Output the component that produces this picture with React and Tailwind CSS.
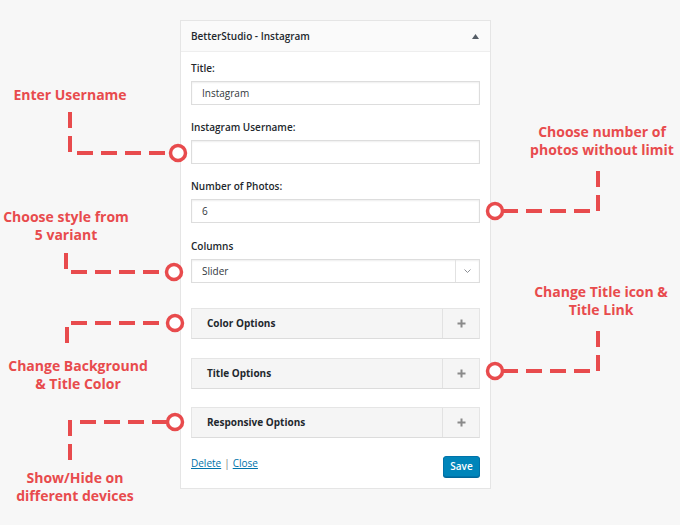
import React from 'react';

const RED = '#e84b4d';

const Field = ({ label, value, className = '' }) => (
  <div className={className}>
    <div className="h-[14px] text-[10px] font-semibold leading-[14px] text-[#23282d]">{label}</div>
    <div className="mt-[6px] flex h-[24px] items-center border border-[#dddddd] bg-white px-[10px] text-[10px] text-[#32373c] shadow-[inset_0_1px_2px_rgba(0,0,0,0.07)]">
      {value}
    </div>
  </div>
);

const Section = ({ title, className = '' }) => (
  <div className={`flex h-[31px] border border-[#e5e5e5] border-b-[#dcdcdc] bg-[#f5f5f5] ${className}`}>
    <div className="flex flex-1 items-center pl-[15px] text-[10px] font-bold text-[#23282d]">{title}</div>
    <div className="flex w-[37px] items-center justify-center border-l border-[#e2e2e2]">
      <svg width="9" height="9" viewBox="0 0 9 9">
        <path d="M4.5 0.5V8.5M0.5 4.5H8.5" stroke="#8a8a8a" strokeWidth="2" />
      </svg>
    </div>
  </div>
);

const Note = ({ lines, x, y, w = 170 }) => (
  <div
    className="absolute text-center text-[14px] font-bold leading-[18px] text-[#e84b4d]"
    style={{ left: x - w / 2, top: y - 9, width: w }}
  >
    {lines.map((l) => (
      <div key={l}>{l}</div>
    ))}
  </div>
);

export default function App() {
  return (
    <div
      className="relative h-[525px] w-[680px] overflow-hidden bg-[#f7f7f7]"
      style={{ fontFamily: '"Open Sans", "Liberation Sans", sans-serif' }}
    >
      <div className="pl-[180px] pt-[20px]">
        <div className="w-[311px] border border-[#e5e5e5] bg-white">
          {/* widget header */}
          <div className="flex h-[31px] items-center justify-between border-b border-[#eeeeee] bg-[#fafafa] pl-[10px] pr-[11px]">
            <span className="text-[10px] font-semibold text-[#23282d]">BetterStudio - Instagram</span>
            <svg width="7" height="5" viewBox="0 0 7 5">
              <path d="M0 5L3.5 0L7 5Z" fill="#555d66" />
            </svg>
          </div>

          <div className="px-[10px] pb-[11px] pt-[9px]">
            <Field label="Title:" value="Instagram" />
            <Field label="Instagram Username:" value="" className="mt-[15px]" />
            <Field label="Number of Photos:" value="6" className="mt-[15px]" />

            <div className="mt-[16px]">
              <div className="h-[14px] text-[10px] font-semibold leading-[14px] text-[#23282d]">Columns</div>
              <div className="mt-[6px] flex h-[24px] border border-[#dddddd] bg-white text-[10px] text-[#32373c] shadow-[inset_0_1px_2px_rgba(0,0,0,0.07)]">
                <div className="flex flex-1 items-center px-[10px]">Slider</div>
                <div className="flex w-[24px] items-center justify-center border-l border-[#e2e2e2]">
                  <svg width="7" height="4" viewBox="0 0 7 4">
                    <path d="M0.5 0.5L3.5 3.5L6.5 0.5" fill="none" stroke="#8c8f94" strokeWidth="1" />
                  </svg>
                </div>
              </div>
            </div>

            <Section title="Color Options" className="mt-[25px]" />
            <Section title="Title Options" className="mt-[19px]" />
            <Section title="Responsive Options" className="mt-[18px]" />

            <div className="mt-[18px] flex items-start justify-between">
              <div className="pt-[1px] text-[10px] leading-[12px] text-[#7a7a7a]">
                <a className="text-[#0073aa] underline">Delete</a>
                <span className="px-[3px]">|</span>
                <a className="text-[#0073aa] underline">Close</a>
              </div>
              <button className="h-[21px] w-[37px] rounded-[3px] border border-[#0073aa] bg-[#0085ba] text-[10px] font-semibold text-white shadow-[0_1px_0_#006799]">
                Save
              </button>
            </div>
          </div>
        </div>
      </div>

      {/* callout lines */}
      <svg className="absolute left-0 top-0" width="680" height="525" viewBox="0 0 680 525">
        <g fill="none" stroke={RED} strokeWidth="4" strokeDasharray="16 8">
          <path d="M70 112V153H170" />
          <path d="M66 253V272H166" />
          <path d="M67 343V323H167" />
          <path d="M70 460V422H167" />
          <path d="M598 171V211H503" />
          <path d="M598 331V371H503" />
        </g>
        <g fill="#ffffff" stroke={RED} strokeWidth="3.5">
          <circle cx="178" cy="153" r="7.5" />
          <circle cx="174" cy="272" r="7.5" />
          <circle cx="175" cy="323" r="7.5" />
          <circle cx="175" cy="422" r="7.5" />
          <circle cx="495" cy="211" r="7.5" />
          <circle cx="495" cy="371" r="7.5" />
        </g>
      </svg>

      <Note lines={['Enter Username']} x={70} y={95} />
      <Note lines={['Choose style from', '5 variant']} x={66} y={217} />
      <Note lines={['Change Background', '& Title Color']} x={78} y={366} />
      <Note lines={['Show/Hide on', 'different devices']} x={75} y={478} />
      <Note lines={['Choose number of', 'photos without limit']} x={602} y={132} />
      <Note lines={['Change Title icon &', 'Title Link']} x={601} y={292} />
    </div>
  );
}
